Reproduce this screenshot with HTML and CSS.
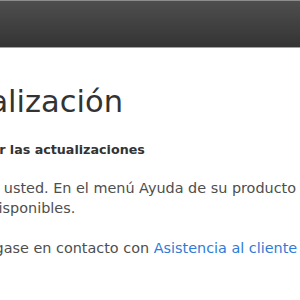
FILE: index.html
```html
<!DOCTYPE html>
<html lang="es">
<head>
<meta charset="utf-8">
<title>Actualización de software</title>
<link rel="stylesheet" href="styles.css">
</head>
<body>
<header class="topbar"></header>
<main class="page">
  <h1 class="title">Actualización</h1>
  <h2 class="subtitle">Cómo buscar las actualizaciones</h2>
  <p class="text first">Es fácil para usted. En el menú Ayuda de su producto elija Buscar actualizaciones<br>para ver las actualizaciones disponibles.</p>
  <p class="text second">Si necesita ayuda, póngase en contacto con <a class="link" href="#">Asistencia al cliente</a> de Apple.</p>
</main>
</body>
</html>
```
FILE: styles.css
```css
html, body { margin: 0; padding: 0; background: #fff; overflow: hidden; }
body { font-family: "DejaVu Sans", sans-serif; }
.topbar {
  height: 46px;
  border-top: 1px solid #8d8d8d;
  border-bottom: 1px solid #a3a3a3;
  background: linear-gradient(#4e4e4e, #343434);
}
.page { width: 600px; white-space: nowrap; }
.title { margin: 0 0 0 -79px; padding-top: 37px; font-size: 30.5px; font-weight: normal; color: #333; line-height: 34px; }
.subtitle { margin: 0 0 0 -87px; padding-top: 23px; font-size: 12.7px; font-weight: bold; color: #333; line-height: 16px; }
.text { margin: 0; padding-top: 20px; font-size: 14.4px; line-height: 20px; color: #4e4e4e; }
.first { margin-left: -216px; text-indent: 127px; }
.second { margin-left: -169px; }
.link { color: #2f7bd6; text-decoration: none; }
```
